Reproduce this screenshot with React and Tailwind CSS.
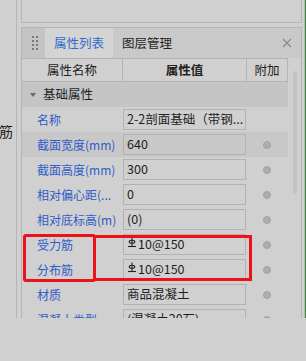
import React from "react";

function Rebar() {
  return (
    <svg width="10" height="11" viewBox="0 0 10 11" className="mr-[1px] -mt-[4px] shrink-0">
      <path d="M5 0.5 V9.5" stroke="#222" strokeWidth="1.1" fill="none" />
      <path d="M2.2 5 C2.2 2.6 7.8 2.6 7.8 5 C7.8 6.6 2.2 6.6 2.2 5 Z" stroke="#222" strokeWidth="1.1" fill="none" />
      <path d="M1 9.5 H9" stroke="#222" strokeWidth="1.1" fill="none" />
    </svg>
  );
}

function Row({ label, value, hl, circle = true, rebar }) {
  return (
    <div className={`flex h-[25px] shrink-0 items-center ${hl ? "bg-[#c8c8c8]" : ""}`}>
      <div className="w-[101px] pl-[15px] text-[12px] text-[#2f5cc8] whitespace-nowrap overflow-hidden">
        {label}
      </div>
      <div className="w-[123px] h-[21px] border border-[#b2b2b2] flex items-center pl-[3px] text-[12.5px] text-[#1e1e1e] whitespace-nowrap overflow-hidden">
        {rebar && <Rebar />}
        {value}
      </div>
      <div className="flex-1 flex justify-center">
        {circle && (
          <div className="w-[8px] h-[8px] rounded-full bg-[#adadad] border border-[#a3a3a3]" />
        )}
      </div>
    </div>
  );
}

export default function App() {
  return (
    <div
      className="w-[306px] h-[361px] bg-[#d0d0d0] relative overflow-hidden"
      style={{ fontFamily: '"Noto Sans CJK SC", "Noto Sans", sans-serif' }}
    >
      <div className="flex h-[318px]">
        {/* left strip */}
        <div className="w-[17px] border-r border-[#b6b6b6] relative shrink-0">
          <div className="absolute right-[3px] top-[122px] text-[14px] leading-[18px] text-[#222]">筋</div>
        </div>
        <div className="w-[4px] shrink-0" />
        {/* main column */}
        <div className="w-[281px] shrink-0 flex flex-col">
          <div className="h-[23px] shrink-0 border-l border-r border-b border-[#b6b6b6]" />
          <div className="h-[4px] shrink-0" />
          <div className="flex-1 min-h-0 border-l border-r border-t border-[#b4b4b4] flex flex-col overflow-hidden">
            {/* tab bar */}
            <div className="h-[30px] bg-[#c9c9c9] flex items-stretch shrink-0">
              <div className="w-[23px] bg-[#c4c4c4] flex items-center justify-center">
                <div className="grid grid-cols-2 gap-x-[2px] gap-y-[2px] ml-[3px]">
                  {Array.from({ length: 8 }).map((_, i) => (
                    <div key={i} className="w-[2px] h-[2px] bg-[#7a7a7a]" />
                  ))}
                </div>
              </div>
              <div className="w-[68px] bg-[#d4d4d4] flex items-center justify-center text-[12.5px] text-[#2f6ccc]">
                属性列表
              </div>
              <div className="w-[68px] flex items-center justify-center text-[12.5px] text-[#1e1e1e]">
                图层管理
              </div>
              <div className="flex-1 flex items-center justify-end pr-[9px]">
                <svg width="10" height="10" viewBox="0 0 10 10">
                  <path d="M1 1 L9 9 M9 1 L1 9" stroke="#8a8a8a" strokeWidth="1.2" />
                </svg>
              </div>
            </div>
            {/* body */}
            <div className="flex flex-1 min-h-0 overflow-hidden">
              <div className="w-[266px] shrink-0 flex flex-col">
                {/* header */}
                <div className="flex h-[24px] shrink-0 border-t border-b border-r border-[#b4b4b4] text-[12.5px] text-[#222]">
                  <div className="w-[101px] border-r border-[#b4b4b4] flex items-center justify-center">属性名称</div>
                  <div className="w-[124px] border-r border-[#b4b4b4] flex items-center justify-center font-bold">属性值</div>
                  <div className="flex-1 flex items-center justify-center">附加</div>
                </div>
                {/* group */}
                <div className="h-[25px] shrink-0 bg-[#c5c5c5] flex items-center">
                  <svg width="6" height="4" viewBox="0 0 6 4" className="ml-[8px] mr-[7px]">
                    <path d="M0 0 H6 L3 4 Z" fill="#6a6a6a" />
                  </svg>
                  <span className="text-[12.5px] text-[#1e1e1e]">基础属性</span>
                </div>
                <Row label="名称" value="2-2剖面基础（带钢..." circle={false} />
                <Row label="截面宽度(mm)" value="640" hl />
                <Row label="截面高度(mm)" value="300" />
                <Row label="相对偏心距(..." value="0" />
                <Row label="相对底标高(m)" value="(0)" />
                <Row label="受力筋" value="10@150" rebar />
                <Row label="分布筋" value="10@150" rebar />
                <Row label="材质" value="商品混凝土" />
                <Row label="混凝土类型" value="(混凝土20石)" />
              </div>
              <div className="flex-1 flex justify-center pt-[13px]">
                <div className="w-[4px] h-[123px] rounded-full bg-[#c3c3c3]" />
              </div>
            </div>
          </div>
        </div>
        <div className="w-[2px] shrink-0" />
        <div className="w-[1px] bg-[#b8b8b8] shrink-0" />
        <div className="w-[1px] shrink-0 bg-[#3a8a3a]" />
      </div>

      {/* red annotation boxes */}
      <div className="absolute left-[23px] top-[234px] w-[73px] h-[48px] border-[3px] border-[#e8141c] rounded-[3px]" />
      <div className="absolute left-[93px] top-[235px] w-[159px] h-[46px] border-[3px] border-[#ee1118]" />
    </div>
  );
}
